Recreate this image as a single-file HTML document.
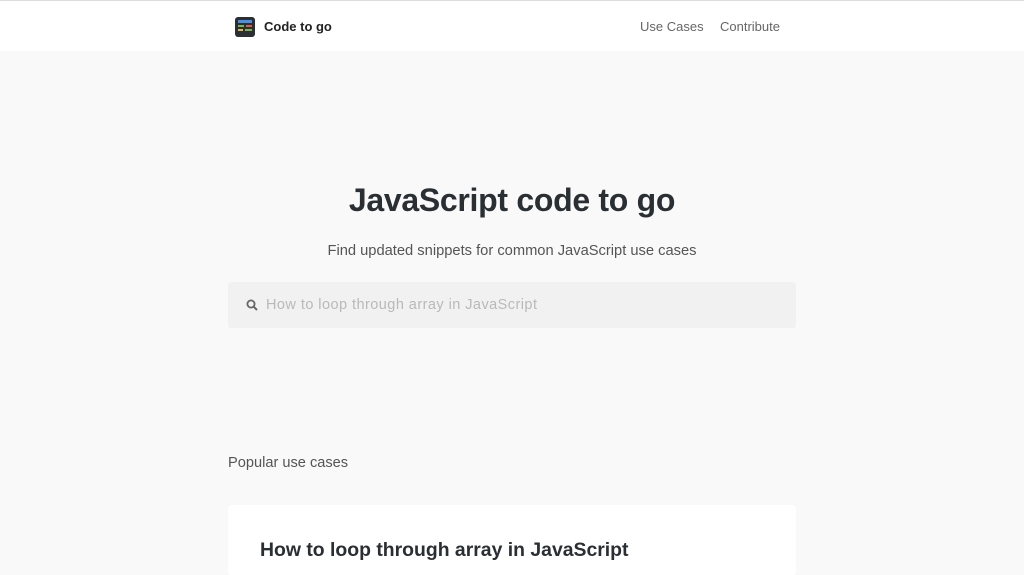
<!DOCTYPE html>
<html><head><style>
body{margin:0;background:#f9f9f9;font-family:"Liberation Sans",sans-serif;width:1024px;height:563px;overflow:hidden;position:relative}
.top{position:absolute;top:0;left:0;width:1024px;height:51px;background:#fff;border-top:1px solid #ddd;box-sizing:border-box}
.logo{position:absolute;left:235px;top:16px;width:20px;height:20px;background:#2b2f33;border-radius:3px}
.brand{position:absolute;left:264px;top:18px;font-size:13px;font-weight:bold;color:#222}
.nav{position:absolute;top:18px;font-size:13px;color:#666}
h1{position:absolute;top:182px;left:0;width:1024px;text-align:center;margin:0;font-size:32px;color:#2a2f33;font-weight:bold;letter-spacing:-0.3px}
.sub{position:absolute;top:243px;width:1024px;text-align:center;font-size:14.7px;color:#555}
.search{position:absolute;left:228px;top:282px;width:568px;height:46px;background:#f1f1f1;border-radius:3px}
.ph{position:absolute;left:38px;top:15px;font-size:14.5px;letter-spacing:0.45px;color:#b9b9b9}
.pop{position:absolute;left:228px;top:455px;font-size:14.6px;color:#555}
.card{position:absolute;left:228px;top:505px;width:568px;height:70px;background:#fff;border-radius:3px}
.card div{position:absolute;left:32px;top:34px;font-size:19.4px;font-weight:bold;color:#2a2f33}
</style></head><body>
<div class="top">
<div class="logo"><div style="position:absolute;left:3px;top:3px;width:14px;height:3px;background:#4a90e2"></div><div style="position:absolute;left:3px;top:8px;width:6px;height:2px;background:#7ab648"></div><div style="position:absolute;left:11px;top:8px;width:6px;height:2px;background:#e05a47"></div><div style="position:absolute;left:3px;top:12px;width:5px;height:2px;background:#e0b84a"></div><div style="position:absolute;left:10px;top:12px;width:7px;height:2px;background:#7ab648"></div></div>
<div class="brand">Code to go</div>
<div class="nav" style="left:640px">Use Cases</div>
<div class="nav" style="left:720px">Contribute</div>
</div>
<h1>JavaScript code to go</h1>
<div class="sub">Find updated snippets for common JavaScript use cases</div>
<div class="search"><svg style="position:absolute;left:18px;top:17px" width="12" height="12" viewBox="0 0 12 12"><circle cx="5" cy="5" r="3.6" fill="none" stroke="#666" stroke-width="1.8"/><path d="M7.6 7.6L11 11" stroke="#666" stroke-width="2"/></svg><div class="ph">How to loop through array in JavaScript</div></div>
<div class="pop">Popular use cases</div>
<div class="card"><div>How to loop through array in JavaScript</div></div>
</body></html>
